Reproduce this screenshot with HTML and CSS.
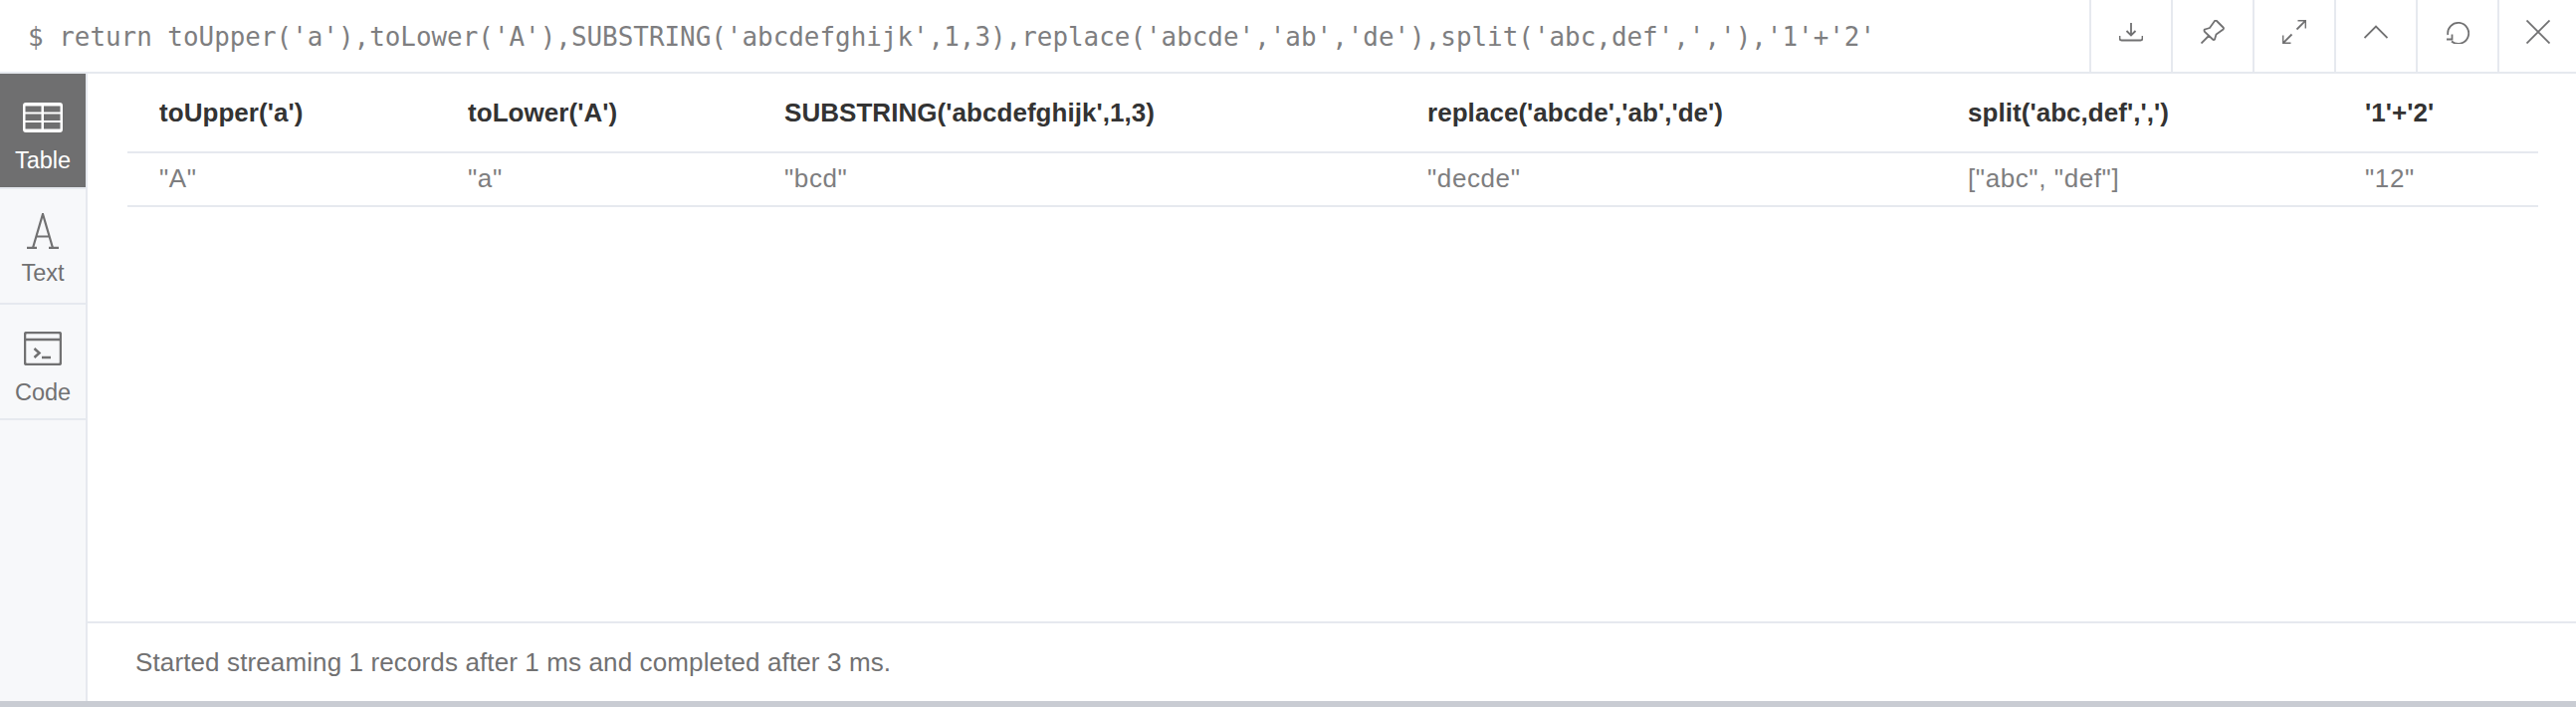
FILE: index.html
```html
<!DOCTYPE html>
<html lang="en">

<head>
    <meta charset="UTF-8">
    <title>Result frame</title>
    <link rel="stylesheet" href="styles.css">
</head>

<body>

    <div class="frame">
        <div class="header">
            <p class="query">$ return toUpper('a'),toLower('A'),SUBSTRING('abcdefghijk',1,3),replace('abcde','ab','de'),split('abc,def',','),'1'+'2'</p>
            <div class="actions">
                <div class="action action-download">
                    <svg width="24" height="24" viewBox="0 0 24 24"><path d="M12 0v12M7.500 8l4.500 4.500L16.500 8M0.500 13v2.500q0 2 2 2h19q2 0 2-2V13"/></svg>
                </div>
                <div class="action">
                    <svg width="24" height="24" viewBox="0 0 24 24"><path d="M0.500 23.500l8-8M4 9.500l5-1.500 5-7q1-1 2 0l6.500 6.500q1 1 0 2l-7 5-1.500 5q-1 1-2 0L4 12q-1-1.500 0-2.500z"/></svg>
                </div>
                <div class="action">
                    <svg width="24" height="24" viewBox="0 0 24 24"><path d="M14.500 9.500L23.500 0.500M15.500 0.500h8v8M0.500 23.500l9-9M0.500 15.500v8h8"/></svg>
                </div>
                <div class="action">
                    <svg width="24" height="24" viewBox="0 0 24 24"><path d="M0.500 18L12 6.500 23.500 18"/></svg>
                </div>
                <div class="action">
                    <svg width="24" height="24" viewBox="0 0 24 24"><path d="M6 21.500A10.500 10.500 0 1 0 2.300 15M1 19.500h5.500v-5"/></svg>
                </div>
                <div class="action">
                    <svg width="24" height="24" viewBox="0 0 24 24"><path d="M0.500 0.500l23 23M23.500 0.500l-23 23"/></svg>
                </div>
            </div>
        </div>

        <div class="body">
            <div class="sidebar">
                <div class="tab tab-active">
                    <svg width="40" height="30" viewBox="0 0 40 30"><path class="fill" fill-rule="evenodd" d="M3 0h34q3 0 3 3v24q0 3-3 3H3q-3 0-3-3V3q0-3 3-3zM2.500 3.500V9.500h16V3.500zM21 3.500V9.500h16.500V3.500zM2.500 11.500V18h16V11.500zM21 11.500V18h16.500V11.500zM2.500 20v6.500h16V20zM21 20v6.500h16.500V20z"/></svg>
                    <span>Table</span>
                </div>
                <div class="tab tab-text">
                    <svg width="32" height="36" viewBox="0 0 32 36"><path class="mid" d="M6 35L16 1l10 34M9.500 23.500h13"/><path class="thick" d="M0 35h10M22 35h10"/></svg>
                    <span>Text</span>
                </div>
                <div class="tab tab-code">
                    <svg width="38" height="34" viewBox="0 0 38 34"><path class="thick" d="M3 1h32q2 0 2 2v28q0 2-2 2H3q-2 0-2-2V3q0-2 2-2zM1 8h36M10.500 17l5 4.500-5 4.500M18 26h9"/></svg>
                    <span>Code</span>
                </div>
            </div>

            <div class="content">
                <div class="tableWrap">
                    <table>
                        <colgroup>
                            <col class="c1"><col class="c2"><col class="c3"><col class="c4"><col class="c5"><col class="c6">
                        </colgroup>
                        <thead>
                            <tr>
                                <th>toUpper('a')</th>
                                <th>toLower('A')</th>
                                <th>SUBSTRING('abcdefghijk',1,3)</th>
                                <th>replace('abcde','ab','de')</th>
                                <th>split('abc,def',',')</th>
                                <th>'1'+'2'</th>
                            </tr>
                        </thead>
                        <tbody>
                            <tr>
                                <td>"A"</td>
                                <td>"a"</td>
                                <td>"bcd"</td>
                                <td>"decde"</td>
                                <td>["abc", "def"]</td>
                                <td>"12"</td>
                            </tr>
                        </tbody>
                    </table>
                </div>
                <div class="status">Started streaming 1 records after 1 ms and completed after 3 ms.</div>
            </div>
        </div>
    </div>

</body>

</html>
```

FILE: styles.css
```css
* {
    margin: 0;
    padding: 0;
    box-sizing: border-box;
}

html,
body {
    width: 100%;
    height: 100%;
    font-family: "Liberation Sans", Arial, sans-serif;
    background-color: #fff;
    overflow: hidden;
}

.frame {
    width: 100%;
    height: 100%;
    display: flex;
    flex-direction: column;
    border-bottom: 6px solid #c9ccd3;
}

svg {
    display: block;
    fill: none;
    stroke: #717172;
    stroke-width: 1.800;
}

svg .fill {
    fill: #fff;
    stroke: none;
}

svg .mid {
    stroke-width: 2.200;
}

svg .thick {
    stroke-width: 2.500;
}

.header {
    height: 74px;
    display: flex;
    justify-content: space-between;
    border-bottom: 2px solid #e6e9ef;
}

.query {
    padding: 20px 0 0 28px;
    font-family: "DejaVu Sans Mono", monospace;
    font-size: 25.920px;
    line-height: 34px;
    color: #7e7e80;
    white-space: nowrap;
}

.actions {
    display: flex;
}

.action {
    width: 82px;
    display: flex;
    align-items: center;
    justify-content: center;
    padding-bottom: 8px;
    border-left: 2px solid #e6e9ef;
}

.action-download {
    padding: 0 0 2px;
}

.action:last-child {
    width: 79px;
}

.body {
    flex: 1;
    display: flex;
    min-height: 0;
}

.sidebar {
    width: 88px;
    background-color: #f7f8fa;
    border-right: 2px solid #e6e9ef;
}

.tab {
    display: flex;
    flex-direction: column;
    align-items: center;
    font-size: 23.500px;
    line-height: 28px;
    color: #717172;
    border-bottom: 2px solid #e6e9ef;
}

.tab-active {
    height: 116px;
    padding-top: 29px;
    color: #fff;
    background-color: #6f6f70;
}

.tab-active span {
    margin-top: 14px;
}

.tab-text {
    height: 116px;
    padding-top: 24px;
}

.tab-text span {
    margin-top: 10px;
}

.tab-code {
    height: 116px;
    padding-top: 27px;
}

.tab-code span {
    margin-top: 13px;
}

.content {
    flex: 1;
    display: flex;
    flex-direction: column;
    min-width: 0;
}

.tableWrap {
    flex: 1;
    padding: 0 38px 0 40px;
}

table {
    width: 2422px;
    table-layout: fixed;
    border-collapse: collapse;
    font-size: 26px;
}

.c1 { width: 310px; }
.c2 { width: 318px; }
.c3 { width: 646px; }
.c4 { width: 543px; }
.c5 { width: 399px; }
.c6 { width: 206px; }

th,
td {
    padding-left: 32px;
    text-align: left;
    white-space: nowrap;
    border-bottom: 2px solid #e6e9ef;
}

th {
    height: 79px;
    letter-spacing: .05px;
    font-weight: 700;
    color: #333;
}

td {
    height: 54px;
    padding-bottom: 2px;
    letter-spacing: .6px;
    color: #7e7e80;
}

.status {
    height: 80px;
    padding: 25px 0 0 48px;
    font-size: 26px;
    line-height: 28px;
    letter-spacing: .12px;
    color: #717172;
    border-top: 2px solid #e6e9ef;
}
```
